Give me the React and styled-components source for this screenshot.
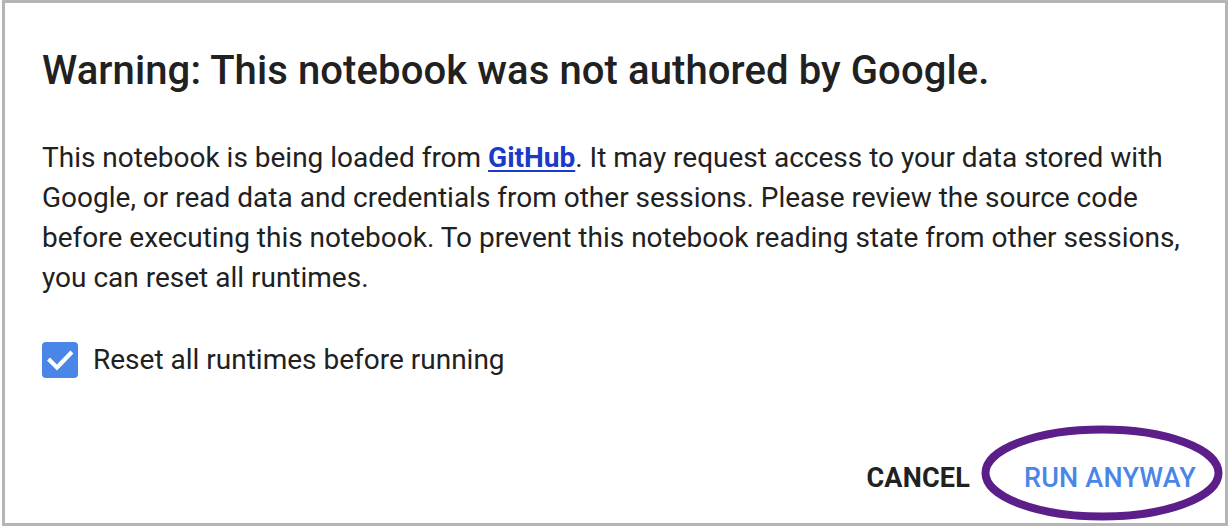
import React from "react";
import styled, { createGlobalStyle } from "styled-components";

const Global = createGlobalStyle`
  html, body { margin: 0; padding: 0; background: #ffffff; }
  body { font-family: Roboto, "Noto Sans", Arial, sans-serif; color: #212121; }
`;

const Frame = styled.div`
  box-sizing: border-box;
  margin-left: 2px;
  width: 1226px;
  height: 526px;
  border: 3px solid #b5b5b5;
  background: #fff;
  display: flex;
  flex-direction: column;
  padding: 44px 29px 0 37px;
`;

const Title = styled.h1`
  margin: 0;
  font-family: Roboto, sans-serif;
  font-weight: 500;
  font-size: 40px;
  line-height: 48px;
  color: #212121;
  letter-spacing: 0.1px;
`;

const Body = styled.p`
  margin: 43px 0 0;
  font-size: 28px;
  line-height: 40px;
  color: #212121;
  max-width: 1160px;
`;

const Link = styled.a`
  color: #1a3ac7;
  font-weight: 700;
  text-decoration: underline;
  text-decoration-thickness: 2px;
  text-underline-offset: 3px;
`;

const CheckRow = styled.label`
  display: flex;
  align-items: center;
  gap: 15px;
  margin-top: 42px;
  font-size: 28px;
  line-height: 40px;
  color: #212121;
`;

const Actions = styled.div`
  margin-top: auto;
  height: 90px;
  display: flex;
  justify-content: flex-end;
  align-items: center;
  gap: 54px;
`;

const Button = styled.button`
  position: relative;
  background: none;
  border: none;
  padding: 0;
  font-family: Roboto, sans-serif;
  font-size: 27px;
  letter-spacing: 0.2px;
  font-weight: ${(p) => (p.$primary ? 500 : 700)};
  color: ${(p) => (p.$primary ? "#4a86e8" : "#212121")};
  cursor: pointer;
`;

const Ring = styled.svg`
  position: absolute;
  left: -45px;
  top: -39px;
  width: 246px;
  height: 100px;
  pointer-events: none;
  overflow: visible;
`;

function CheckBox() {
  return (
    <svg width="36" height="36" viewBox="0 0 36 36">
      <rect x="0" y="0" width="36" height="36" rx="4" fill="#4a86e8" />
      <path d="M8 18.5 L15 25.5 L28.5 11.5" fill="none" stroke="#fff" strokeWidth="4.2" strokeLinecap="square" />
    </svg>
  );
}

export default function App() {
  return (
    <>
      <Global />
      <Frame>
        <Title>Warning: This notebook was not authored by Google.</Title>
        <Body>
          This notebook is being loaded from <Link href="#">GitHub</Link>. It may request access to your data stored with
          Google, or read data and credentials from other sessions. Please review the source code
          before executing this notebook. To prevent this notebook reading state from other sessions,
          you can reset all runtimes.
        </Body>
        <CheckRow>
          <CheckBox />
          Reset all runtimes before running
        </CheckRow>
        <Actions>
          <Button>CANCEL</Button>
          <Button $primary>
            RUN ANYWAY
            <Ring viewBox="0 0 246 100">
              <ellipse cx="123" cy="50" rx="116.5" ry="43.5" fill="none" stroke="#5c1f8a" strokeWidth="8" />
            </Ring>
          </Button>
        </Actions>
      </Frame>
    </>
  );
}
